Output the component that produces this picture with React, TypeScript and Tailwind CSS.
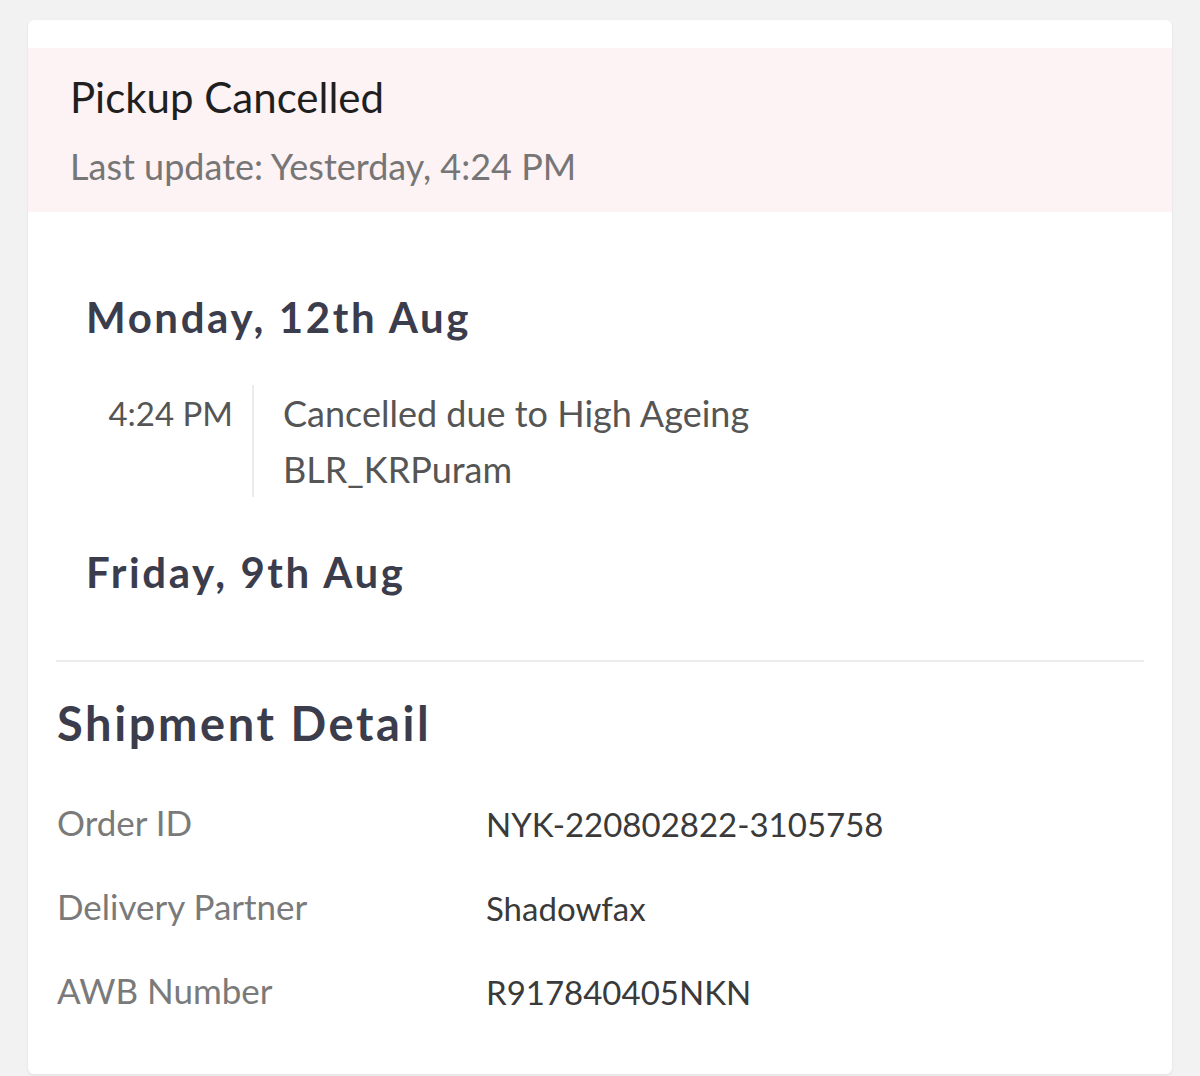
const events = [
  {
    date: 'Monday, 12th Aug',
    items: [{ time: '4:24 PM', lines: ['Cancelled due to High Ageing', 'BLR_KRPuram'] }],
  },
  { date: 'Friday, 9th Aug', items: [] as { time: string; lines: string[] }[] },
];

const details = [
  { label: 'Order ID', value: 'NYK-220802822-3105758' },
  { label: 'Delivery Partner', value: 'Shadowfax' },
  { label: 'AWB Number', value: 'R917840405NKN' },
];

export default function App() {
  return (
    <div className="min-h-screen bg-[#f2f2f2] px-[28px] pt-[20px] font-['Lato',sans-serif]">
      <div className="bg-white rounded-[6px] shadow-[0_1px_3px_rgba(0,0,0,0.08)] pt-[28px] pb-[42px]">
        {/* status band */}
        <div className="bg-[#fdf2f4] h-[164px] px-[42px] pt-[25px]">
          <h1 className="text-[42px] leading-[48px] text-[#1f1f1f]">Pickup Cancelled</h1>
          <p className="mt-[25px] text-[36px] leading-[40px] text-[#767676]">Last update: Yesterday, 4:24 PM</p>
        </div>

        {/* timeline */}
        <div className="px-[58px] pt-[81px]">
          {events.map((day, i) => (
            <div key={day.date} className={i > 0 ? 'mt-[51px]' : ''}>
              <h2 className="text-[42px] leading-[48px] font-bold tracking-[2.6px] text-[#3b3c4c]">{day.date}</h2>
              {day.items.map((ev) => (
                <div key={ev.time} className="mt-[44px] flex">
                  <div className="w-[147px] text-right text-[33px] leading-[56px] text-[#555]">{ev.time}</div>
                  <div className="ml-[19px] border-l-2 border-[#ececec] pl-[29px] text-[36px] leading-[56px] text-[#555]">
                    {ev.lines.map((l) => (
                      <div key={l}>{l}</div>
                    ))}
                  </div>
                </div>
              ))}
            </div>
          ))}
        </div>

        <div className="mx-[28px] mt-[64px] border-t-2 border-[#ececec]" />

        {/* shipment detail */}
        <div className="px-[29px] pt-[33px]">
          <h2 className="text-[47px] leading-[56px] font-bold tracking-[2.6px] text-[#3b3c4c]">Shipment Detail</h2>
          <div className="mt-[29px]">
            {details.map((d) => (
              <div key={d.label} className="flex h-[84px] items-center">
                <div className="w-[429px] text-[35px] text-[#7a7a7a]">{d.label}</div>
                <div className="pt-[6px] text-[33px] text-[#3a3a3a]">{d.value}</div>
              </div>
            ))}
          </div>
        </div>
      </div>
    </div>
  );
}
